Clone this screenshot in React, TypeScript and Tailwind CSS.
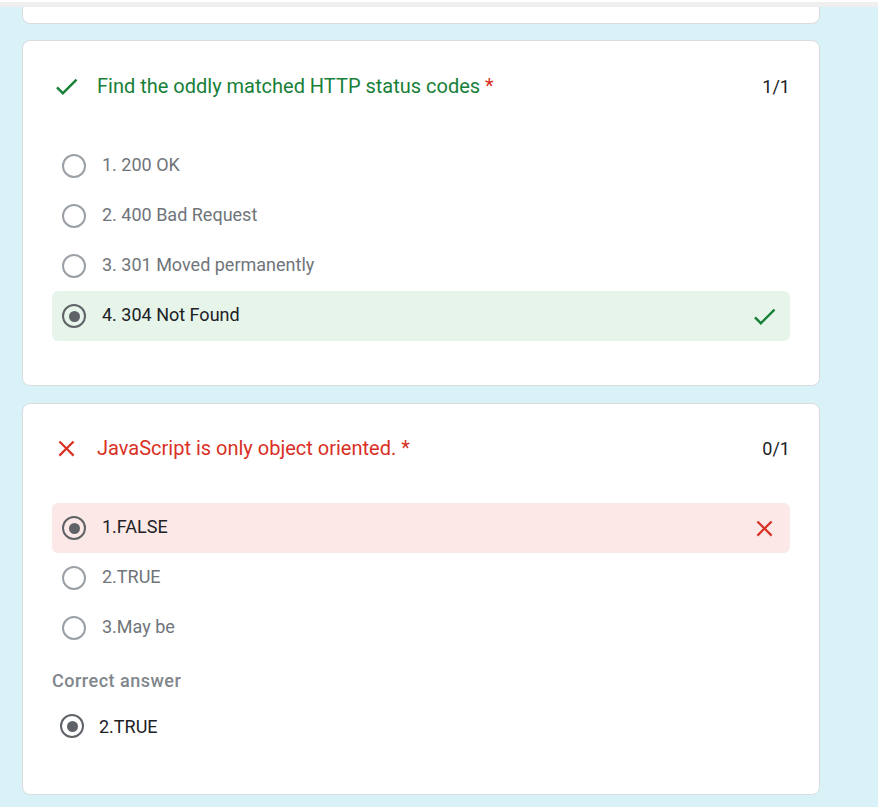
import React from "react";

const font = { fontFamily: "Roboto, 'Noto Sans', Arial, sans-serif" };

function Check({ size = 29 }: { size?: number }) {
  return (
    <svg width={size} height={size} viewBox="0 0 24 24" fill="#188038">
      <path d="M9 16.17L4.83 12l-1.42 1.41L9 19 21 7l-1.41-1.41z" />
    </svg>
  );
}

function Cross({ size = 27 }: { size?: number }) {
  return (
    <svg width={size} height={size} viewBox="0 0 24 24" fill="#d93025">
      <path d="M19 6.41L17.59 5 12 10.59 6.41 5 5 6.41 10.59 12 5 17.59 6.41 19 12 13.41 17.59 19 19 17.59 13.41 12z" />
    </svg>
  );
}

function Radio({ selected }: { selected?: boolean }) {
  return (
    <div
      className={
        "w-[24px] h-[24px] rounded-full border-[2px] flex items-center justify-center shrink-0 " +
        (selected ? "border-[#5f6368]" : "border-[#9aa0a6]")
      }
    >
      {selected && <div className="w-[11px] h-[11px] rounded-full bg-[#5f6368]" />}
    </div>
  );
}

type Opt = { label: string; state?: "correct" | "wrong" };

function Option({ label, state }: Opt) {
  const bg =
    state === "correct" ? "bg-[#e6f4ea]" : state === "wrong" ? "bg-[#fce8e6]" : "";
  return (
    <div className={"h-[50px] flex items-center pl-[10px] pr-[11px] rounded-[6px] " + bg}>
      <Radio selected={!!state} />
      <span
        className={
          "ml-[16px] text-[18px] leading-[24px] pb-[2px] flex-1 " +
          (state ? "text-[#202124]" : "text-[#70757a]")
        }
      >
        {label}
      </span>
      {state === "correct" && (
        <div className="w-[29px] flex justify-center">
          <Check />
        </div>
      )}
      {state === "wrong" && (
        <div className="w-[29px] flex justify-center">
          <Cross />
        </div>
      )}
    </div>
  );
}

function Title({ ok, text, score }: { ok: boolean; text: string; score: string }) {
  return (
    <div className="h-[30px] flex items-center">
      <div className="w-[29px] flex justify-center shrink-0">{ok ? <Check /> : <Cross />}</div>
      <div
        className={
          "ml-[16px] flex-1 text-[20px] " + (ok ? "text-[#188038]" : "text-[#d93025]")
        }
      >
        {text} <span className="text-[#d93025]">*</span>
      </div>
      <div className="text-[18px] text-[#202124]">{score}</div>
    </div>
  );
}

export default function App() {
  return (
    <div className="w-[878px] h-[807px] bg-[#d9f2f8] overflow-hidden" style={font}>
      <div className="h-[2px] bg-white" />
      <div className="h-[5px] bg-[#efefef]" />
      <div className="ml-[22px] w-[798px] h-[17px] bg-white border border-t-0 border-[#dadce0] rounded-b-[8px]" />
      <div className="ml-[22px] w-[798px] mt-[16px] bg-white border border-[#dadce0] rounded-[8px] px-[29px] pt-[30px] pb-[44px]">
        <Title ok text="Find the oddly matched HTTP status codes" score="1/1" />
        <div className="mt-[40px]">
          <Option label="1. 200 OK" />
          <Option label="2. 400 Bad Request" />
          <Option label="3. 301 Moved permanently" />
          <Option label="4. 304 Not Found" state="correct" />
        </div>
      </div>
      <div className="ml-[22px] w-[798px] mt-[17px] bg-white border border-[#dadce0] rounded-[8px] px-[29px] pt-[29px] pb-[44px]">
        <Title ok={false} text="JavaScript is only object oriented." score="0/1" />
        <div className="mt-[40px]">
          <Option label="1.FALSE" state="wrong" />
          <Option label="2.TRUE" />
          <Option label="3.May be" />
        </div>
        <div className="mt-[15px] h-[24px] flex items-center text-[18px] font-medium text-[#80868b] tracking-[0.5px]">
          Correct answer
        </div>
        <div className="mt-[10px] h-[48px] flex items-center pl-[8px]">
          <Radio selected />
          <span className="ml-[15px] text-[18px] text-[#202124]">2.TRUE</span>
        </div>
      </div>
    </div>
  );
}
